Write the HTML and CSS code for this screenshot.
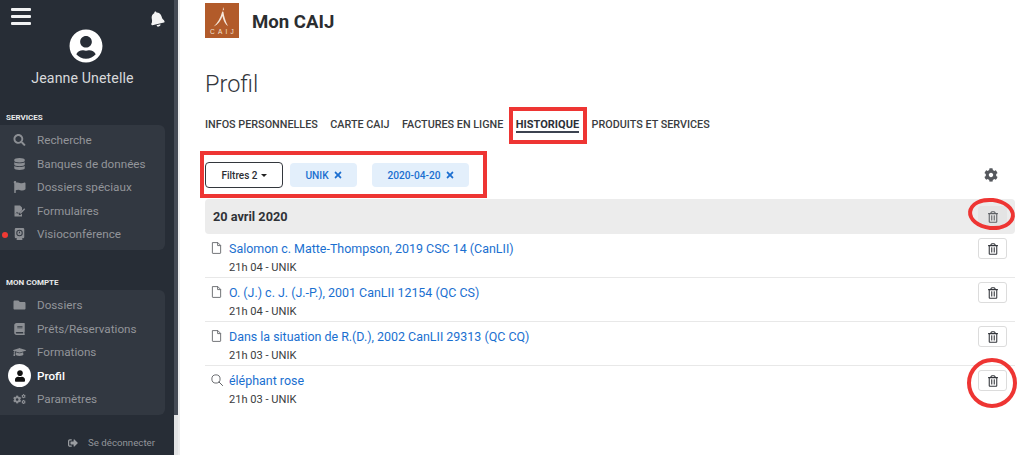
FILE: index.html
```html
<!DOCTYPE html>
<html lang="fr">
<head>
<meta charset="utf-8">
<title>Mon CAIJ - Profil</title>
<link rel="stylesheet" href="styles.css">
</head>
<body>
<svg class="defs" width="0" height="0" aria-hidden="true">
  <symbol id="i-user" viewBox="0 0 496 512"><path d="M248 8C111 8 0 119 0 256s111 248 248 248 248-111 248-248S385 8 248 8zm0 96c48.6 0 88 39.4 88 88s-39.4 88-88 88-88-39.4-88-88 39.4-88 88-88zm0 344c-58.7 0-111.3-26.6-146.5-68.2 18.8-35.4 55.6-59.8 98.5-59.8 2.4 0 4.8.4 7.1 1.1 13 4.2 26.6 6.9 40.9 6.9 14.3 0 28-2.7 40.9-6.9 2.3-.7 4.7-1.1 7.1-1.1 42.9 0 79.7 24.4 98.5 59.8C359.3 421.4 306.7 448 248 448z"/></symbol>
  <symbol id="i-person" viewBox="0 0 448 512"><path d="M224 256c70.7 0 128-57.3 128-128S294.700 0 224 0 96 57.300 96 128s57.300 128 128 128zm89.600 32h-16.700c-22.200 10.200-46.900 16-72.900 16s-50.600-5.800-72.900-16h-16.700C60.200 288 0 348.200 0 422.400V464c0 26.500 21.500 48 48 48h352c26.500 0 48-21.500 48-48v-41.600c0-74.200-60.200-134.400-134.400-134.400z"/></symbol>
  <symbol id="i-bell" viewBox="0 0 448 512"><path d="M224 512c35.32 0 63.97-28.65 63.97-64H160.03c0 35.35 28.65 64 63.97 64zm215.39-149.71c-19.32-20.76-55.47-51.99-55.47-154.29 0-77.7-54.48-139.9-127.94-155.16V32c0-17.67-14.32-32-31.98-32s-31.98 14.33-31.98 32v20.84C118.56 68.1 64.08 130.3 64.08 208c0 102.3-36.15 133.53-55.47 154.29-6 6.45-8.66 14.16-8.61 21.71.11 16.4 12.98 32 32.1 32h383.8c19.12 0 32-15.6 32.1-32 .05-7.55-2.61-15.27-8.61-21.71z"/></symbol>
  <symbol id="i-search" viewBox="0 0 512 512"><path d="M505 442.7L405.3 343c-4.5-4.5-10.6-7-17-7H372c27.6-35.3 44-79.7 44-128C416 93.1 322.9 0 208 0S0 93.1 0 208s93.1 208 208 208c48.3 0 92.7-16.4 128-44v16.3c0 6.4 2.5 12.5 7 17l99.7 99.7c9.4 9.4 24.6 9.4 33.9 0l28.3-28.3c9.4-9.4 9.4-24.6.1-34zM208 336c-70.7 0-128-57.2-128-128 0-70.7 57.2-128 128-128 70.7 0 128 57.2 128 128 0 70.7-57.2 128-128 128z"/></symbol>
  <symbol id="i-db" viewBox="0 0 448 512"><path d="M448 73.143v45.714C448 159.143 347.667 192 224 192S0 159.143 0 118.857V73.143C0 32.857 100.333 0 224 0s224 32.857 224 73.143zM448 176v102.857C448 319.143 347.667 352 224 352S0 319.143 0 278.857V176c48.125 33.143 136.208 48.572 224 48.572S399.874 209.143 448 176zm0 160v102.857C448 479.143 347.667 512 224 512S0 479.143 0 438.857V336c48.125 33.143 136.208 48.572 224 48.572S399.874 369.143 448 336z"/></symbol>
  <symbol id="i-flag" viewBox="0 0 512 512"><path d="M349.565 98.783C295.978 98.783 251.721 64 184.348 64c-24.955 0-47.309 4.384-68.045 12.013a55.947 55.947 0 0 0 3.586-23.562C118.117 24.015 94.806 1.206 66.338.048 34.345-1.254 8 24.296 8 56c0 19.026 9.497 35.825 24 45.945V488c0 13.255 10.745 24 24 24h16c13.255 0 24-10.745 24-24v-94.4c28.311-12.064 63.582-22.122 114.435-22.122 53.588 0 97.844 34.783 165.217 34.783 48.169 0 86.667-16.294 122.505-40.858C506.84 359.452 512 349.571 512 339.045v-243.1c0-23.393-24.269-38.87-45.485-29.016-34.338 15.948-76.454 31.854-116.95 31.854z"/></symbol>
  <symbol id="i-form" viewBox="0 0 24 24"><path d="M2 1h11l4 4v5.500L11 17l-.5 3.500 4-1 2.500-2.500V23H2z"/><path d="M4 17.500l3-4 2 2.500 3-1-1 1.500-2.500 1-2-2-1.500 2z" fill="#323841"/><path d="M13 15l8.500-8.500 2 2L15 17l-2.500.5z"/></symbol>
  <symbol id="i-cam" viewBox="0 0 24 24"><path fill-rule="evenodd" d="M5 0h14a2.500 2.500 0 0 1 2.500 2.500V18a2.500 2.500 0 0 1-2.500 2.500H17l1 3.500H6l1-3.500H5A2.500 2.500 0 0 1 2.500 18V2.500A2.500 2.500 0 0 1 5 0zm7 3.500a6.500 6.500 0 1 0 0 13 6.500 6.500 0 0 0 0-13zM12 5.500a4.500 4.500 0 1 1 0 9 4.500 4.500 0 0 1 0-9zM11 7l2 .3-.3 3.200-2 .5z"/></symbol>
  <symbol id="i-folder" viewBox="0 0 512 512"><path d="M464 128H272l-64-64H48C21.490 64 0 85.490 0 112v288c0 26.510 21.490 48 48 48h416c26.510 0 48-21.490 48-48V176c0-26.510-21.490-48-48-48z"/></symbol>
  <symbol id="i-book" viewBox="0 0 448 512"><path d="M448 360V24c0-13.300-10.700-24-24-24H96C43 0 0 43 0 96v320c0 53 43 96 96 96h328c13.300 0 24-10.700 24-24v-16c0-7.500-3.500-14.300-8.900-18.700-4.200-15.400-4.200-59.300 0-74.700 5.400-4.300 8.900-11.100 8.900-18.600zM128 134c0-3.300 2.700-6 6-6h212c3.300 0 6 2.700 6 6v20c0 3.300-2.700 6-6 6H134c-3.300 0-6-2.700-6-6v-20zm0 64c0-3.300 2.700-6 6-6h212c3.300 0 6 2.700 6 6v20c0 3.300-2.700 6-6 6H134c-3.300 0-6-2.700-6-6v-20zm253.400 250H96c-17.700 0-32-14.300-32-32 0-17.600 14.400-32 32-32h285.400c-1.900 17.100-1.900 46.900 0 64z"/></symbol>
  <symbol id="i-cap" viewBox="0 0 640 512"><path d="M622.340 153.200L343.400 67.500c-15.200-4.670-31.600-4.670-46.790 0L17.660 153.200c-23.540 7.230-23.540 38.360 0 45.590l48.630 14.940c-10.670 13.190-17.230 29.280-17.880 46.900C38.780 266.150 32 276.110 32 288c0 10.780 5.680 19.850 13.860 25.650L20.330 428.530C18.110 438.520 25.710 448 35.940 448h56.110c10.240 0 17.840-9.480 15.620-19.470L82.140 313.650C90.320 307.850 96 298.780 96 288c0-11.570-6.470-21.250-15.660-26.870.76-15.020 8.440-28.300 20.690-36.720L296.600 284.500c9.060 2.780 26.440 6.250 46.790 0l278.950-85.700c23.550-7.240 23.550-38.370 0-45.600zM352.790 315.090c-28.530 8.760-52.840 3.920-65.590 0l-145.020-44.550L128 384c0 35.350 85.960 64 192 64s192-28.650 192-64l-14.180-113.470-145.030 44.560z"/></symbol>
  <symbol id="i-cog" viewBox="0 0 512 512"><path d="M487.400 315.700l-42.600-24.600c4.300-23.200 4.300-47 0-70.200l42.600-24.600c4.900-2.800 7.100-8.600 5.500-14-11.100-35.600-30-67.800-54.700-94.600-3.800-4.100-10-5.100-14.800-2.300L380.800 110c-17.900-15.400-38.500-27.300-60.800-35.100V25.800c0-5.600-3.900-10.500-9.400-11.700-36.700-8.200-74.300-7.800-109.200 0-5.500 1.200-9.400 6.100-9.400 11.700V75c-22.200 7.900-42.800 19.800-60.800 35.100L88.700 85.500c-4.900-2.800-11-1.900-14.800 2.300-24.700 26.700-43.600 58.900-54.700 94.600-1.700 5.400.6 11.200 5.500 14L67.300 221c-4.300 23.200-4.300 47 0 70.200l-42.600 24.600c-4.900 2.800-7.100 8.600-5.500 14 11.100 35.600 30 67.800 54.700 94.600 3.800 4.100 10 5.100 14.800 2.300l42.600-24.600c17.900 15.400 38.500 27.300 60.800 35.100v49.200c0 5.600 3.900 10.500 9.400 11.700 36.700 8.200 74.300 7.800 109.200 0 5.500-1.200 9.400-6.100 9.400-11.700v-49.200c22.200-7.900 42.800-19.800 60.800-35.100l42.600 24.600c4.900 2.800 11 1.900 14.800-2.300 24.700-26.700 43.600-58.900 54.700-94.600 1.500-5.500-.7-11.300-5.600-14.100zM256 336c-44.100 0-80-35.900-80-80s35.900-80 80-80 80 35.900 80 80-35.900 80-80 80z"/></symbol>
  <symbol id="i-cogs" viewBox="0 0 640 512"><use href="#i-cog" x="0" y="76" width="410" height="410"/><use href="#i-cog" x="410" y="10" width="220" height="220"/><use href="#i-cog" x="410" y="290" width="220" height="220"/></symbol>
  <symbol id="i-out" viewBox="0 0 512 512"><path d="M497 273L329 441c-15 15-41 4.500-41-17v-96H152c-13.300 0-24-10.700-24-24v-96c0-13.300 10.700-24 24-24h136V88c0-21.400 25.900-32 41-17l168 168c9.300 9.400 9.300 24.600 0 34zM192 436v-40c0-6.600-5.400-12-12-12H96c-17.700 0-32-14.300-32-32V160c0-17.700 14.300-32 32-32h84c6.600 0 12-5.400 12-12V76c0-6.600-5.400-12-12-12H96c-53 0-96 43-96 96v192c0 53 43 96 96 96h84c6.600 0 12-5.400 12-12z"/></symbol>
  <symbol id="i-x" viewBox="0 0 352 512"><path d="M242.720 256l100.070-100.070c12.280-12.280 12.280-32.190 0-44.480l-22.240-22.240c-12.280-12.280-32.190-12.280-44.480 0L176 189.280 75.930 89.210c-12.280-12.280-32.190-12.280-44.480 0L9.210 111.450c-12.280 12.280-12.280 32.190 0 44.480L109.280 256 9.210 356.070c-12.280 12.280-12.280 32.190 0 44.480l22.240 22.240c12.280 12.280 32.200 12.280 44.480 0L176 322.720l100.070 100.070c12.280 12.280 32.200 12.280 44.480 0l22.240-22.240c12.280-12.280 12.280-32.190 0-44.480L242.720 256z"/></symbol>
  <symbol id="i-trash" viewBox="0 0 448 512"><path d="M268 416h24a12 12 0 0 0 12-12V188a12 12 0 0 0-12-12h-24a12 12 0 0 0-12 12v216a12 12 0 0 0 12 12zM432 80h-82.410l-34-56.700A48 48 0 0 0 274.410 0H173.590a48 48 0 0 0-41.160 23.300L98.410 80H16A16 16 0 0 0 0 96v16a16 16 0 0 0 16 16h16v336a48 48 0 0 0 48 48h288a48 48 0 0 0 48-48V128h16a16 16 0 0 0 16-16V96a16 16 0 0 0-16-16zM171.840 50.910A6 6 0 0 1 177 48h94a6 6 0 0 1 5.150 2.910L293.610 80H154.390zM368 464H80V128h288zm-212-48h24a12 12 0 0 0 12-12V188a12 12 0 0 0-12-12h-24a12 12 0 0 0-12 12v216a12 12 0 0 0 12 12z"/></symbol>
  <symbol id="i-file" viewBox="0 0 14 16"><path d="M1.500.8h7.300l3.700 3.700v10a.7.7 0 0 1-.7.700H2.200a.7.7 0 0 1-.7-.7zM8.500.8v4h4" fill="none" stroke="currentColor" stroke-width="1.100" stroke-linejoin="round"/></symbol>
  <symbol id="i-loupe" viewBox="0 0 14 14"><circle cx="5.800" cy="5.800" r="4.800" fill="none" stroke="currentColor" stroke-width="1"/><path d="M9.300 9.300l4.200 4.200" fill="none" stroke="currentColor" stroke-width="1.100" stroke-linecap="round"/></symbol>
</svg>

<div class="app">
  <aside class="sidebar">
    <div class="side-top">
      <div class="burger"><span></span><span></span><span></span></div>
      <svg class="bell"><use href="#i-bell"/></svg>
    </div>
    <svg class="avatar"><use href="#i-user"/></svg>
    <div class="username">Jeanne Unetelle</div>

    <h2 class="side-title first">SERVICES</h2>
    <ul class="panel">
      <li class="item"><svg class="ico"><use href="#i-search"/></svg>Recherche</li>
      <li class="item"><svg class="ico"><use href="#i-db"/></svg>Banques de données</li>
      <li class="item"><svg class="ico"><use href="#i-flag"/></svg>Dossiers spéciaux</li>
      <li class="item"><svg class="ico"><use href="#i-form"/></svg>Formulaires</li>
      <li class="item"><span class="live"></span><svg class="ico"><use href="#i-cam"/></svg>Visioconférence</li>
    </ul>

    <h2 class="side-title second">MON COMPTE</h2>
    <ul class="panel">
      <li class="item"><svg class="ico"><use href="#i-folder"/></svg>Dossiers</li>
      <li class="item"><svg class="ico"><use href="#i-book"/></svg>Prêts/Réservations</li>
      <li class="item"><svg class="ico"><use href="#i-cap"/></svg>Formations</li>
      <li class="item active"><span class="bubble"><svg class="ico-user"><use href="#i-person"/></svg></span>Profil</li>
      <li class="item"><svg class="ico"><use href="#i-cogs"/></svg>Paramètres</li>
    </ul>

    <div class="logout"><svg class="ico-out"><use href="#i-out"/></svg>Se déconnecter</div>
  </aside>

  <div class="rail"><div class="rail-thumb"></div></div>

  <main class="main">
    <header class="brand">
      <div class="logo">
        <svg class="logo-mark" viewBox="0 0 20 20"><path d="M11 0l1 2.500-1.200 1.300zM10.200 4.500l1.200.3c.6 4.500 2 9.500 4.600 14.200-3-1.500-5-6.500-5.500-10-1.500 4.500-4.500 8.500-8.800 10.500 4-3.500 7-9 8.500-15z" fill="#f6e7da"/></svg>
        <span class="logo-text">CAIJ</span>
      </div>
      <h1 class="brand-name">Mon CAIJ</h1>
    </header>

    <h2 class="page-title">Profil</h2>

    <nav class="tabs">
      <a class="tab">INFOS PERSONNELLES</a>
      <a class="tab">CARTE CAIJ</a>
      <a class="tab">FACTURES EN LIGNE</a>
      <a class="tab current">HISTORIQUE</a>
      <a class="tab">PRODUITS ET SERVICES</a>
    </nav>

    <div class="filters">
      <button class="filter-btn">Filtres 2<span class="caret"></span></button>
      <span class="chip">UNIK<svg class="chip-x"><use href="#i-x"/></svg></span>
      <span class="chip date">2020-04-20<svg class="chip-x"><use href="#i-x"/></svg></span>
      <svg class="gear"><use href="#i-cog"/></svg>
    </div>

    <section class="history">
      <div class="day">
        <span>20 avril 2020</span>
        <button class="del flat"><svg class="trash"><use href="#i-trash"/></svg></button>
      </div>
      <article class="row">
        <svg class="kind"><use href="#i-file"/></svg>
        <div class="row-body"><a class="row-link">Salomon c. Matte-Thompson, 2019 CSC 14 (CanLII)</a><div class="row-meta">21h 04 - UNIK</div></div>
        <button class="del"><svg class="trash"><use href="#i-trash"/></svg></button>
      </article>
      <article class="row">
        <svg class="kind"><use href="#i-file"/></svg>
        <div class="row-body"><a class="row-link">O. (J.) c. J. (J.-P.), 2001 CanLII 12154 (QC CS)</a><div class="row-meta">21h 04 - UNIK</div></div>
        <button class="del"><svg class="trash"><use href="#i-trash"/></svg></button>
      </article>
      <article class="row">
        <svg class="kind"><use href="#i-file"/></svg>
        <div class="row-body"><a class="row-link">Dans la situation de R.(D.), 2002 CanLII 29313 (QC CQ)</a><div class="row-meta">21h 03 - UNIK</div></div>
        <button class="del"><svg class="trash"><use href="#i-trash"/></svg></button>
      </article>
      <article class="row last">
        <svg class="kind kind-search"><use href="#i-loupe"/></svg>
        <div class="row-body"><a class="row-link">éléphant rose</a><div class="row-meta">21h 03 - UNIK</div></div>
        <button class="del"><svg class="trash"><use href="#i-trash"/></svg></button>
      </article>
    </section>
  </main>
</div>

<div class="mark mark-tab"></div>
<div class="mark mark-filters"></div>
<div class="mark mark-oval-a"></div>
<div class="mark mark-oval-b"></div>
</body>
</html>
```
FILE: styles.css
```css
* { box-sizing: border-box; }
html, body { margin: 0; height: 100%; overflow: hidden; background: #fff; }
body { font-family: Roboto, "Liberation Sans", sans-serif; color: #2f3136; position: relative; }
.defs { position: absolute; }
ul { list-style: none; margin: 0; padding: 0; }
h1, h2 { margin: 0; }
button { font-family: inherit; cursor: pointer; }

.app { display: flex; height: 455px; }

/* Sidebar */
.sidebar { width: 174px; flex: none; background: #272d36; color: #fff; padding-top: 8px; display: flex; flex-direction: column; }
.side-top { display: flex; justify-content: space-between; padding: 0 10px 0 11px; height: 21px; flex: none; }
.burger { width: 20px; height: 17px; display: flex; flex-direction: column; justify-content: space-between; }
.burger span { display: block; height: 3px; background: #f1f2f3; border-radius: 1px; }
.bell { width: 14px; height: 16px; margin-top: 3px; fill: #f4f4f4; transform: rotate(-14deg); }
.avatar { width: 34px; height: 34px; fill: #fff; margin: 0 0 0 69px; display: block; flex: none; }
.username { width: 165px; text-align: center; font-size: 14.200px; line-height: 18px; color: #d8d9db; margin-top: 6px; letter-spacing: .1px; }
.side-title { font-size: 8px; line-height: 10px; font-weight: 700; color: #e8e9ea; padding-left: 6px; }
.side-title.first { margin-top: 26px; margin-bottom: 2px; }
.side-title.second { margin-top: 28px; margin-bottom: 2px; }
.panel { width: 165px; background: #323841; border-radius: 0 6px 6px 0; padding: 3.500px 0 4px; height: 125px; flex: none; }
.item { height: 23.500px; display: flex; align-items: center; font-size: 11.700px; color: #92959a; padding-left: 13px; position: relative; }
.ico { width: 13px; height: 12px; fill: #8c8f94; margin-right: 11px; flex: none; }
.live { position: absolute; left: 2px; top: 9px; width: 6px; height: 6px; border-radius: 50%; background: #f03a34; }
.item.active { color: #fff; font-weight: 500; padding-left: 37px; }
.bubble { position: absolute; left: 8px; top: 0; width: 23px; height: 23px; border-radius: 50%; background: #fff; display: flex; align-items: center; justify-content: center; }
.ico-user { width: 10px; height: 12px; fill: #111; }
.logout { margin-top: 21px; font-size: 9.700px; line-height: 14px; color: #92959a; display: flex; align-items: center; padding-left: 67px; }
.ico-out { width: 12px; height: 10px; fill: #9a9da1; margin-right: 9px; }

/* rail between sidebar and page */
.rail { width: 6px; flex: none; background: #e3e4e5; border-right: 2px solid #eeeeee; }
.rail-thumb { height: 415px; background: #454b55; }

/* Main */
.main { flex: 1; padding: 3px 9px 0 25px; min-width: 0; }
.brand { display: flex; align-items: center; height: 35px; }
.logo { width: 34px; height: 35px; background: #b25b2a; display: flex; flex-direction: column; align-items: center; flex: none; margin-right: 13px; }
.logo-mark { width: 20px; height: 20px; margin-top: 4px; }
.logo-text { font-family: "Liberation Sans", sans-serif; font-size: 6.500px; line-height: 9px; letter-spacing: 3.200px; color: #f3e4d6; margin-left: 3px; }
.brand-name { font-size: 18.600px; font-weight: 700; line-height: 24px; color: #2b2d30; margin-top: 3px; }
.page-title { font-size: 23.500px; font-weight: 300; line-height: 30px; color: #33363b; margin-top: 31px; }
.tabs { display: flex; gap: 12.500px; margin-top: 15px; height: 22px; }
.tab { font-size: 10.800px; font-weight: 500; line-height: 22px; color: #3a3c40; white-space: nowrap; position: relative; height: 22px; }
.tab.current { font-weight: 700; font-size: 11px; color: #2b3038; }
.tab.current::after { content: ""; position: absolute; left: 0; right: 0; top: 17px; height: 2px; background: #3c4350; }

.filters { display: flex; align-items: center; margin-top: 26px; height: 26px; }
.filter-btn { height: 26px; width: 78px; border: 1px solid #33373d; border-radius: 4px; background: #fff; color: #2c2e33; font-size: 10px; font-weight: 500; padding: 0; display: flex; align-items: center; justify-content: center; margin-right: 7px; }
.caret { width: 0; height: 0; border-left: 3px solid transparent; border-right: 3px solid transparent; border-top: 3px solid #222; margin-left: 3px; }
.chip { height: 24px; background: #e3effb; color: #1c6fd0; border-radius: 4px; font-size: 10.200px; font-weight: 500; display: flex; align-items: center; justify-content: center; width: 67px; margin-right: 15px; }
.chip.date { width: 97px; }
.chip-x { width: 8px; height: 10px; fill: #1c6fd0; margin-left: 5px; }
.gear { width: 14px; height: 14px; fill: #55585d; margin-left: auto; margin-right: 17px; }

.history { margin-top: 11px; }
.day { height: 35px; background: #ececec; border-radius: 4px; display: flex; align-items: center; justify-content: space-between; padding: 0 8px 0 8px; font-size: 12.700px; font-weight: 700; color: #2f3237; }
.row { height: 44px; border-bottom: 1px solid #e8e8e8; display: flex; align-items: flex-start; position: relative; padding: 6px 8px 0 6px; }
.row.last { border-bottom: 0; }
.kind { width: 11px; height: 12px; color: #55585c; flex: none; margin-top: 2px; margin-right: 7px; }
.kind-search { width: 12px; height: 12px; margin-right: 6px; }
.row-body { flex: 1; min-width: 0; }
.row-link { display: block; font-size: 12.450px; line-height: 18px; color: #1a6fd0; white-space: nowrap; }
.row-meta { font-size: 11.100px; line-height: 14px; margin-top: 3px; color: #3a3c40; }
.del { width: 29px; height: 21px; border: 1px solid #dcdcdc; border-radius: 3px; background: #fff; padding: 0; display: flex; align-items: center; justify-content: center; margin-top: -2px; flex: none; }
.del.flat { background: #e4e4e4; border-color: #e4e4e4; margin-top: 0; }
.trash { width: 10px; height: 12px; fill: #34373c; }
.del.flat .trash { fill: #5f6266; }

/* red annotations drawn over the screenshot */
.mark { position: absolute; border: 4px solid #ee3533; pointer-events: none; }
.mark-tab { left: 509px; top: 107px; width: 78px; height: 37px; }
.mark-filters { left: 200px; top: 151px; width: 287px; height: 47px; }
.mark-oval-a { left: 968px; top: 198px; width: 47px; height: 32px; border-radius: 50%; transform: rotate(6deg); }
.mark-oval-b { left: 967px; top: 358px; width: 50px; height: 50px; border-radius: 50%; }
```
